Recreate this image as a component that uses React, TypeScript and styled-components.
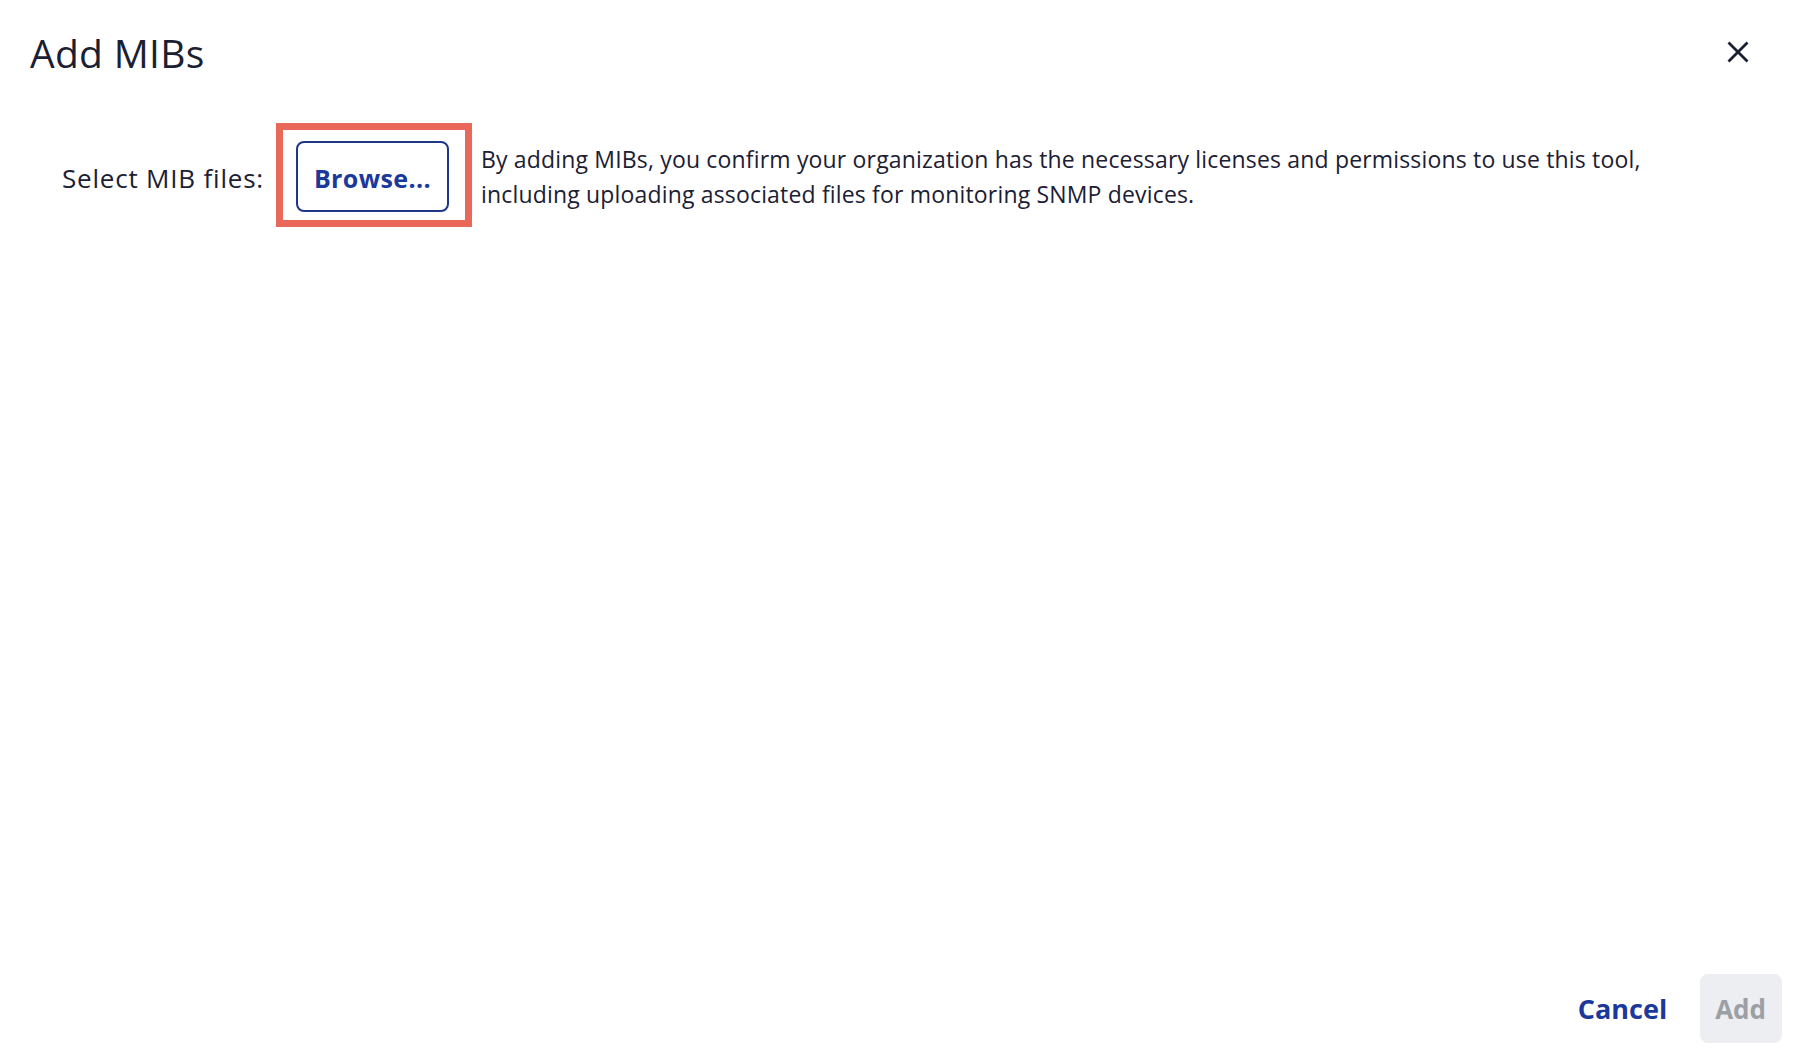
import React from "react";
import styled, { createGlobalStyle } from "styled-components";

const GlobalStyle = createGlobalStyle`
  html, body {
    margin: 0;
    padding: 0;
    background: #ffffff;
  }
  body {
    font-family: "Open Sans", "Liberation Sans", sans-serif;
    color: #1c2033;
  }
  * { box-sizing: border-box; }
`;

const Dialog = styled.div`
  display: flex;
  flex-direction: column;
  height: 100vh;
  background: #ffffff;
`;

const Header = styled.header`
  display: flex;
  align-items: center;
  justify-content: space-between;
  height: 104px;
  padding: 0 40px 0 30px;
`;

const Title = styled.h1`
  margin: 0;
  font-size: 39px;
  font-weight: 400;
  color: #1b1f33;
  letter-spacing: 0.3px;
`;

const CloseButton = styled.button`
  display: flex;
  align-items: center;
  justify-content: center;
  width: 36px;
  height: 36px;
  padding: 0;
  border: none;
  background: transparent;
  color: #1b1f33;
  cursor: pointer;
`;

const Body = styled.main`
  flex: 1;
  padding: 19px 0 0 62px;
`;

const FieldRow = styled.div`
  display: flex;
  align-items: center;
`;

const Label = styled.span`
  margin: 5px 12px 0 0;
  font-size: 26px;
  letter-spacing: 0.8px;
  color: #1c2033;
  white-space: nowrap;
`;

const Highlight = styled.span`
  display: inline-flex;
  flex-shrink: 0;
  padding: 11px 16px 8px 13px;
  border: 7px solid #e9685a;
`;

const BrowseButton = styled.button`
  width: 153px;
  height: 71px;
  padding: 3px 0 0;
  border: 2px solid #1f3786;
  border-radius: 8px;
  background: #ffffff;
  font-family: inherit;
  font-size: 25px;
  font-weight: 700;
  letter-spacing: 0.4px;
  color: #1b389c;
  cursor: pointer;
`;

const Description = styled.p`
  margin: 3px 0 0 9px;
  font-size: 23px;
  line-height: 34.5px;
  letter-spacing: 0.17px;
  color: #1c2033;
  white-space: nowrap;
`;

const Footer = styled.footer`
  display: flex;
  justify-content: flex-end;
  align-items: center;
  gap: 17px;
  padding: 0 14px 13px 0;
`;

const FooterButton = styled.button<{ $variant: "link" | "disabled" }>`
  height: 69px;
  padding: ${(p) => (p.$variant === "link" ? "0 16px" : "0 16px 0 15px")};
  border: none;
  border-radius: 8px;
  background: ${(p) => (p.$variant === "link" ? "transparent" : "#eceef1")};
  color: ${(p) => (p.$variant === "link" ? "#1b389c" : "#9c9fa6")};
  font-family: inherit;
  font-size: ${(p) => (p.$variant === "link" ? "27px" : "26px")};
  font-weight: 700;
  cursor: ${(p) => (p.$variant === "link" ? "pointer" : "default")};
`;

export default function App() {
  return (
    <>
      <GlobalStyle />
      <Dialog>
        <Header>
          <Title>Add MIBs</Title>
          <CloseButton aria-label="Close">
            <svg width="22" height="22" viewBox="0 0 22 22" fill="none">
              <path
                d="M1.5 1.5 L20.5 20.5 M20.5 1.5 L1.5 20.5"
                stroke="currentColor"
                strokeWidth="2.8"
                strokeLinecap="butt"
              />
            </svg>
          </CloseButton>
        </Header>
        <Body>
          <FieldRow>
            <Label>Select MIB files:</Label>
            <Highlight>
              <BrowseButton>Browse...</BrowseButton>
            </Highlight>
            <Description>
              By adding MIBs, you confirm your organization has the necessary licenses and permissions to use this tool,
              <br />
              including uploading associated files for monitoring SNMP devices.
            </Description>
          </FieldRow>
        </Body>
        <Footer>
          <FooterButton $variant="link">Cancel</FooterButton>
          <FooterButton $variant="disabled" disabled>
            Add
          </FooterButton>
        </Footer>
      </Dialog>
    </>
  );
}
